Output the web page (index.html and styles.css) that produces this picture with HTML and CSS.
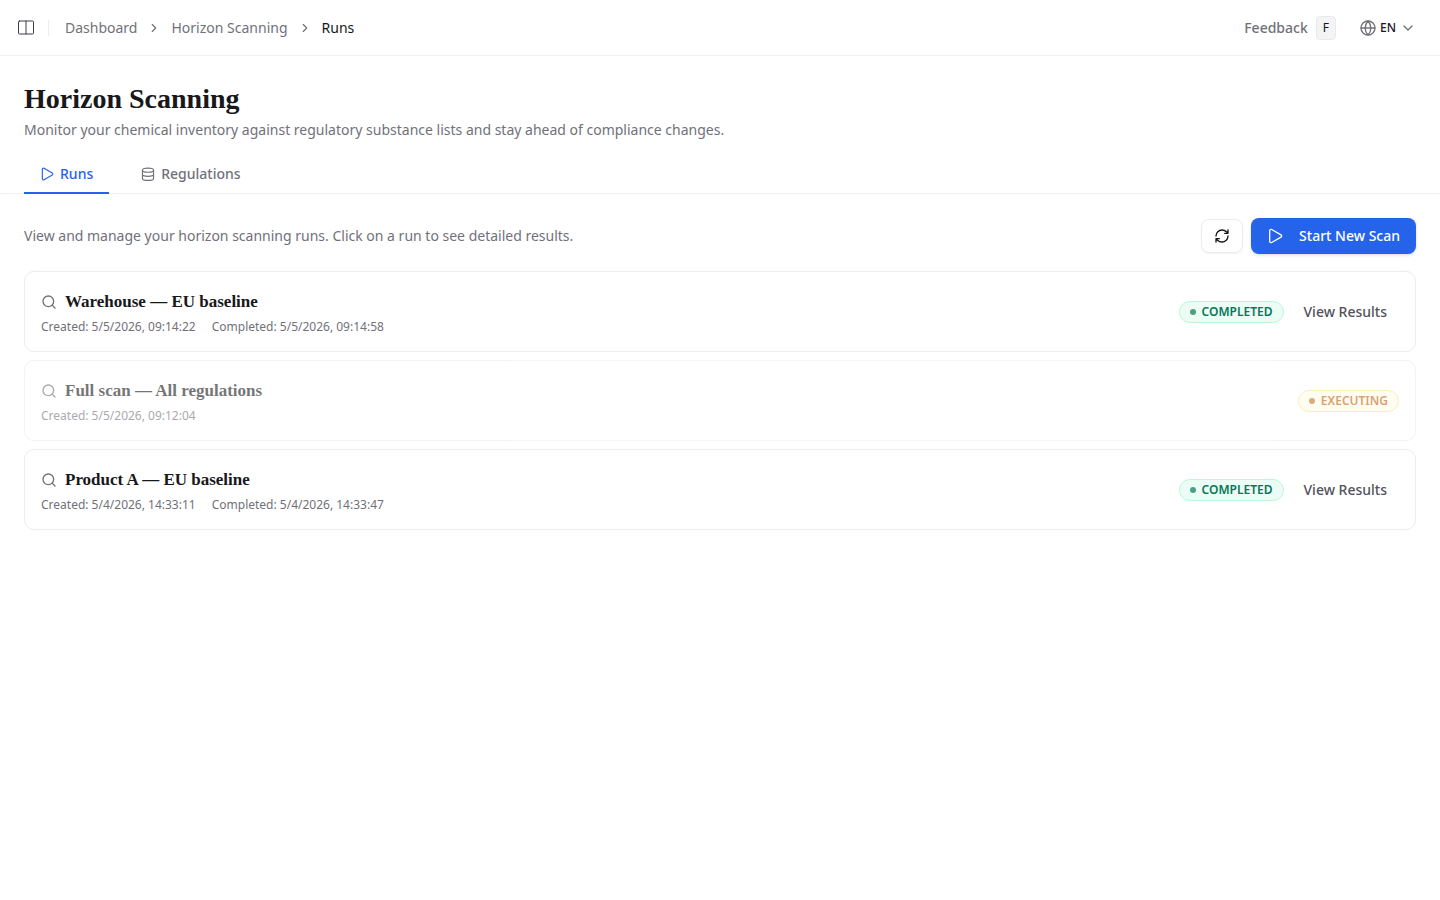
FILE: index.html
```html
<!DOCTYPE html>
<html lang="en">
<head>
    <meta charset="UTF-8">
    <meta name="viewport" content="width=device-width, initial-scale=1.0">
    <title>Horizon Scanning</title>
    <link rel="stylesheet" href="styles.css">
</head>
<body>
    <!-- Icons used more than once -->
    <svg class="sprite" aria-hidden="true">
        <symbol id="icon-chevron" viewBox="0 0 24 24"><path d="m9 18 6-6-6-6"/></symbol>
        <symbol id="icon-play" viewBox="0 0 24 24"><path d="M4 4a2 2 0 0 1 3-1.700l14 8a2 2 0 0 1 0 3.400l-14 8A2 2 0 0 1 4 20z"/></symbol>
        <symbol id="icon-search" viewBox="0 0 24 24"><circle cx="11" cy="11" r="8"/><path d="m21 21-4.300-4.300"/></symbol>
    </svg>

    <header class="topbar">
        <button class="icon-button sidebar-toggle" aria-label="Toggle sidebar">
            <svg class="icon icon-sidebar" viewBox="0 0 18 16"><rect x="1.500" y="1" width="15" height="13" rx="1"/><path d="M9 1v13"/></svg>
        </button>
        <nav class="breadcrumb" aria-label="Breadcrumb">
            <a href="#">Dashboard</a>
            <svg class="icon icon-small"><use href="#icon-chevron"/></svg>
            <a href="#">Horizon Scanning</a>
            <svg class="icon icon-small"><use href="#icon-chevron"/></svg>
            <a href="#" class="current" aria-current="page">Runs</a>
        </nav>
        <div class="topbar-actions">
            <button class="feedback">Feedback <kbd>F</kbd></button>
            <button class="language">
                <svg class="icon" viewBox="0 0 24 24"><circle cx="12" cy="12" r="10.500"/><path d="M12 1.500a15 15 0 0 0 0 21 15 15 0 0 0 0-21M1.500 12h21"/></svg>
                EN
                <svg class="icon icon-down" viewBox="0 0 24 24"><path d="m6 9 6 6 6-6"/></svg>
            </button>
        </div>
    </header>

    <main>
        <div class="page-head">
            <h1>Horizon Scanning</h1>
            <p>Monitor your chemical inventory against regulatory substance lists and stay ahead of compliance changes.</p>
        </div>

        <nav class="tabs">
            <a href="#" class="tab active">
                <svg class="icon icon-small"><use href="#icon-play"/></svg>
                Runs
            </a>
            <a href="#" class="tab">
                <svg class="icon icon-small" viewBox="0 0 24 24"><ellipse cx="12" cy="5.500" rx="9.500" ry="3.500"/><path d="M2.500 5.500v14c0 2 4.250 3.500 9.500 3.500s9.500-1.500 9.500-3.500v-14M2.500 12.500c0 2 4.250 3.500 9.500 3.500s9.500-1.500 9.500-3.500"/></svg>
                Regulations
            </a>
        </nav>

        <section class="content">
            <div class="toolbar">
                <p>View and manage your horizon scanning runs. Click on a run to see detailed results.</p>
                <button class="refresh" aria-label="Refresh">
                    <svg class="icon" viewBox="0 0 24 24"><path d="M3 12a9 9 0 0 1 9-9 9.750 9.750 0 0 1 6.740 2.740L21 8M21 3v5h-5M21 12a9 9 0 0 1-9 9 9.750 9.750 0 0 1-6.740-2.740L3 16M8 16H3v5"/></svg>
                </button>
                <button class="start">
                    <svg class="icon"><use href="#icon-play"/></svg>
                    Start New Scan
                </button>
            </div>

            <div class="runs">
                <article class="run">
                    <div class="run-info">
                        <h2><svg class="icon"><use href="#icon-search"/></svg>Warehouse — EU baseline</h2>
                        <p class="dates"><span>Created: 5/5/2026, 09:14:22</span><span>Completed: 5/5/2026, 09:14:58</span></p>
                    </div>
                    <span class="badge completed">COMPLETED</span>
                    <button class="view">View Results</button>
                </article>

                <article class="run pending">
                    <div class="run-info">
                        <h2><svg class="icon"><use href="#icon-search"/></svg>Full scan — All regulations</h2>
                        <p class="dates"><span>Created: 5/5/2026, 09:12:04</span></p>
                    </div>
                    <span class="badge executing">EXECUTING</span>
                </article>

                <article class="run">
                    <div class="run-info">
                        <h2><svg class="icon"><use href="#icon-search"/></svg>Product A — EU baseline</h2>
                        <p class="dates"><span>Created: 5/4/2026, 14:33:11</span><span>Completed: 5/4/2026, 14:33:47</span></p>
                    </div>
                    <span class="badge completed">COMPLETED</span>
                    <button class="view">View Results</button>
                </article>
            </div>
        </section>
    </main>
</body>
</html>
```
FILE: styles.css
```css
* {
    box-sizing: border-box;
}
body {
    margin: 0;
    font-family: "Noto Sans", sans-serif;
    font-size: 14px;
    line-height: 20px;
    color: #18181b;
    background-color: #fff;
}
h1, h2, p {
    margin: 0;
}
a {
    color: inherit;
    text-decoration: none;
}
button {
    display: flex;
    align-items: center;
    padding: 0;
    border: none;
    font: inherit;
    color: inherit;
    background: none;
    cursor: pointer;
}
.sprite {
    display: none;
}
.icon {
    width: 16px;
    height: 16px;
    flex-shrink: 0;
    fill: none;
    stroke: currentColor;
    stroke-width: 2;
    stroke-linecap: round;
    stroke-linejoin: round;
}
.icon-small {
    width: 14px;
    height: 14px;
}

/* Top bar */
.topbar {
    display: flex;
    align-items: center;
    height: 56px;
    padding: 0 24px 0 17px;
    border-bottom: 1px solid #f0f0f1;
}
.sidebar-toggle {
    padding-right: 13px;
    color: #3f3f46;
}
.icon-sidebar {
    width: 18px;
    stroke-width: 1;
}
.breadcrumb {
    display: flex;
    align-items: center;
    gap: 10px;
    color: #71717a;
}
.breadcrumb::before {
    content: "";
    width: 1px;
    height: 16px;
    margin-right: 6px;
    background-color: #ececee;
}
.breadcrumb .current {
    color: #18181b;
}
.topbar-actions {
    display: flex;
    gap: 24px;
    margin-left: auto;
}
.feedback {
    gap: 8px;
    font-weight: 500;
    color: #71717a;
}
kbd {
    padding: 1px 6px;
    border: 1px solid #e9e9eb;
    border-radius: 4px;
    font-family: inherit;
    font-size: 12px;
    font-weight: 400;
    color: #18181b;
    background-color: #f4f4f5;
}
.language {
    gap: 4px;
    font-size: 12px;
    font-weight: 500;
}
.language .icon {
    color: #71717a;
}

/* Title and tabs */
.page-head {
    padding: 25px 24px 0;
}
h1 {
    font-family: "Liberation Serif", serif;
    font-size: 28px;
    line-height: 36px;
    font-weight: 700;
}
.page-head p {
    margin-top: 3px;
    color: #71717a;
}
.tabs {
    display: flex;
    gap: 16px;
    margin-top: 14px;
    padding: 0 24px;
    border-bottom: 1px solid #f0f0f1;
}
.tab {
    display: flex;
    align-items: center;
    gap: 6px;
    margin-bottom: -1px;
    padding: 10px 16px 8px;
    border-bottom: 2px solid transparent;
    font-weight: 500;
    color: #71717a;
}
.tab.active {
    border-color: #2563eb;
    color: #2563eb;
}

/* Toolbar */
.content {
    padding: 24px;
}
.toolbar {
    display: flex;
    align-items: center;
    gap: 8px;
    margin-bottom: 17px;
}
.toolbar p {
    flex: 1;
    color: #71717a;
}
.refresh {
    padding: 8px 12px;
    border: 1px solid #ececee;
    border-radius: 8px;
    box-shadow: 0 1px 2px rgba(0, 0, 0, 0.06);
}
.start {
    gap: 16px;
    height: 36px;
    padding: 0 16px;
    border-radius: 8px;
    font-weight: 500;
    color: #fff;
    background-color: #2563eb;
    box-shadow: 0 1px 3px rgba(0, 0, 0, 0.16);
}

/* Run cards */
.runs {
    display: flex;
    flex-direction: column;
    gap: 8px;
}
.run {
    display: flex;
    align-items: center;
    gap: 8px;
    padding: 16px;
    border: 1px solid #ececee;
    border-radius: 10px;
}
.run-info {
    flex: 1;
}
.run h2 {
    display: flex;
    align-items: center;
    gap: 8px;
    font-family: "Liberation Serif", serif;
    font-size: 17px;
    line-height: 27px;
    font-weight: 700;
}
.run h2 .icon {
    color: #71717a;
}
.dates {
    display: flex;
    gap: 16px;
    margin-top: 4px;
    font-size: 12px;
    line-height: 16px;
    color: #71717a;
}
.pending {
    opacity: 0.6;
}
.badge {
    display: flex;
    align-items: center;
    gap: 6px;
    padding: 1px 10px;
    border: 1px solid;
    border-radius: 12px;
    font-size: 12px;
    line-height: 18px;
    font-weight: 600;
}
.badge::before {
    content: "";
    width: 6px;
    height: 6px;
    border-radius: 50%;
    background-color: currentColor;
    opacity: 0.7;
}
.completed {
    border-color: #bbf7da;
    color: #047857;
    background-color: #ecfdf5;
}
.executing {
    border-color: #fde68a;
    color: #c2650c;
    background-color: #fffbeb;
}
.executing::before {
    opacity: 0.9;
}
.view {
    padding: 6px 12px;
    font-weight: 500;
    color: #52525b;
}
```
